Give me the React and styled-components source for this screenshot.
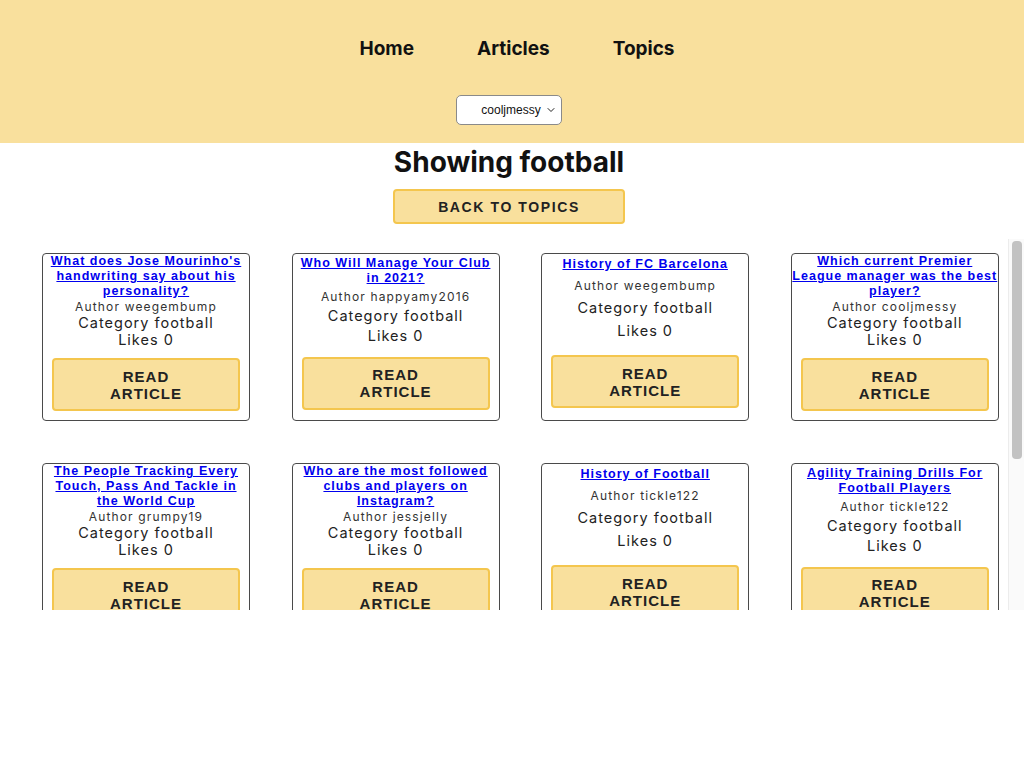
import React from "react";
import styled, { createGlobalStyle } from "styled-components";
import { ChevronDown } from "lucide-react";

const articles = [
    { title: "What does Jose Mourinho's handwriting say about his personality?", author: "weegembump" },
    { title: "Who Will Manage Your Club in 2021?", author: "happyamy2016" },
    { title: "History of FC Barcelona", author: "weegembump" },
    { title: "Which current Premier League manager was the best player?", author: "cooljmessy" },
    { title: "The People Tracking Every Touch, Pass And Tackle in the World Cup", author: "grumpy19" },
    { title: "Who are the most followed clubs and players on Instagram?", author: "jessjelly" },
    { title: "History of Football", author: "tickle122" },
    { title: "Agility Training Drills For Football Players", author: "tickle122" },
    { title: "The Rise Of Thinking Machines", author: "jessjelly" },
    { title: "Running a Node App", author: "grumpy19" },
    { title: "Football Formations Explained", author: "weegembump" },
];

const App = () => {
    return (
        <>
            <GlobalStyle />
            <Header>
                <Nav>
                    <NavLink href="#">Home</NavLink>
                    <NavLink href="#">Articles</NavLink>
                    <NavLink href="#">Topics</NavLink>
                </Nav>
                <SelectWrap>
                    <UserSelect defaultValue="cooljmessy">
                        <option>cooljmessy</option>
                        <option>grumpy19</option>
                        <option>happyamy2016</option>
                        <option>jessjelly</option>
                        <option>tickle122</option>
                        <option>weegembump</option>
                    </UserSelect>
                    <Chevron size={12} strokeWidth={2} />
                </SelectWrap>
            </Header>
            <Main>
                <Title>Showing football</Title>
                <BackButton>Back to topics</BackButton>
            </Main>
            <ArticleArea>
                <ArticleGrid>
                    {articles.map((article, index) => (
                        <Card key={index}>
                            <ArticleTitle href="#">{article.title}</ArticleTitle>
                            <Author>Author {article.author}</Author>
                            <Stat>Category football</Stat>
                            <Stat>Likes 0</Stat>
                            <ReadButton>Read article</ReadButton>
                        </Card>
                    ))}
                </ArticleGrid>
                {/* scroll track drawn by hand, the headless browser hides real scrollbars */}
                <ScrollTrack>
                    <ScrollThumb />
                </ScrollTrack>
            </ArticleArea>
        </>
    );
};

export default App;

const GlobalStyle = createGlobalStyle`
    body {
        margin: 0;
        background: #ffffff;
        font-family: Inter, "Liberation Sans", sans-serif;
        color: #111;
    }
`;

const Header = styled.header`
    background-color: #f9e09d;
    height: 143px;
    box-sizing: border-box;
    padding-top: 37px;
    display: flex;
    flex-direction: column;
    align-items: center;
`;

const Nav = styled.nav`
    display: flex;
    gap: 63px;
    height: 23px;
    align-items: center;
    margin-left: 10px;
`;

const NavLink = styled.a`
    font-family: Inter, sans-serif;
    font-weight: 700;
    font-size: 19px;
    color: #111;
    text-decoration: none;
`;

const SelectWrap = styled.div`
    position: relative;
    margin-top: 35px;
    margin-right: 6px;
`;

const UserSelect = styled.select`
    appearance: none;
    width: 106px;
    height: 30px;
    border: 1px solid #8a8a8a;
    border-radius: 5px;
    background: #fff;
    font-family: "Liberation Sans", Arial, sans-serif;
    font-size: 12px;
    color: #111;
    text-align: center;
    padding: 0 14px 0 18px;
`;

const Chevron = styled(ChevronDown)`
    position: absolute;
    right: 5px;
    top: 9px;
    color: #222;
    pointer-events: none;
`;

const Main = styled.main`
    display: flex;
    flex-direction: column;
    align-items: center;
    padding-right: 6px;
`;

const Title = styled.h1`
    font-family: Inter, sans-serif;
    font-size: 28px;
    font-weight: 700;
    margin: 2px 0 0;
    line-height: 34px;
    color: #111;
`;

const BackButton = styled.button`
    margin-top: 10px;
    width: 232px;
    height: 35px;
    background: #f9e09d;
    border: 2px solid #f4c64e;
    border-radius: 4px;
    font-family: "Liberation Sans", Arial, sans-serif;
    font-weight: 700;
    font-size: 14px;
    letter-spacing: 1.6px;
    text-transform: uppercase;
    color: #222;
`;

const ArticleArea = styled.div`
    margin-top: 15px;
    height: 371px;
    display: flex;
`;

const ArticleGrid = styled.section`
    flex: 1;
    overflow: hidden;
    box-sizing: border-box;
    padding: 14px 0 28px 42px;
    display: grid;
    grid-template-columns: repeat(4, 208px);
    column-gap: 41.6px;
    row-gap: 42px;
    align-content: start;
`;

const ScrollTrack = styled.div`
    width: 10px;
    background: #fafafa;
    border-left: 1px solid #ececec;
    padding: 2px 2px 0 3px;
`;

const ScrollThumb = styled.div`
    height: 218px;
    border-radius: 4px;
    background: #c2c2c2;
`;

const Card = styled.article`
    box-sizing: border-box;
    border: 1px solid #4a4a4a;
    border-radius: 4px;
    background: #fff;
    display: flex;
    flex-direction: column;
    justify-content: space-around;
    align-items: center;
    text-align: center;
`;

const ArticleTitle = styled.a`
    font-family: "Liberation Sans", Arial, sans-serif;
    font-weight: 700;
    font-size: 12.5px;
    line-height: 15px;
    letter-spacing: 1px;
    color: #0000ee;
    text-decoration: underline;
`;

const Author = styled.p`
    margin: 0;
    font-size: 12px;
    line-height: 15px;
    letter-spacing: 1.15px;
    color: #333;
`;

const Stat = styled.p`
    margin: 0;
    font-size: 14.5px;
    line-height: 17px;
    letter-spacing: 1px;
    color: #222;
`;

const ReadButton = styled.button`
    flex-shrink: 0;
    width: 188px;
    height: 53px;
    margin: 10px 0 9px;
    background: #f9e09d;
    border: 2px solid #f4c64e;
    border-radius: 4px;
    padding: 0 40px;
    font-family: "Liberation Sans", Arial, sans-serif;
    font-weight: 700;
    font-size: 15px;
    line-height: 17px;
    letter-spacing: 1px;
    text-transform: uppercase;
    color: #222;
`;
